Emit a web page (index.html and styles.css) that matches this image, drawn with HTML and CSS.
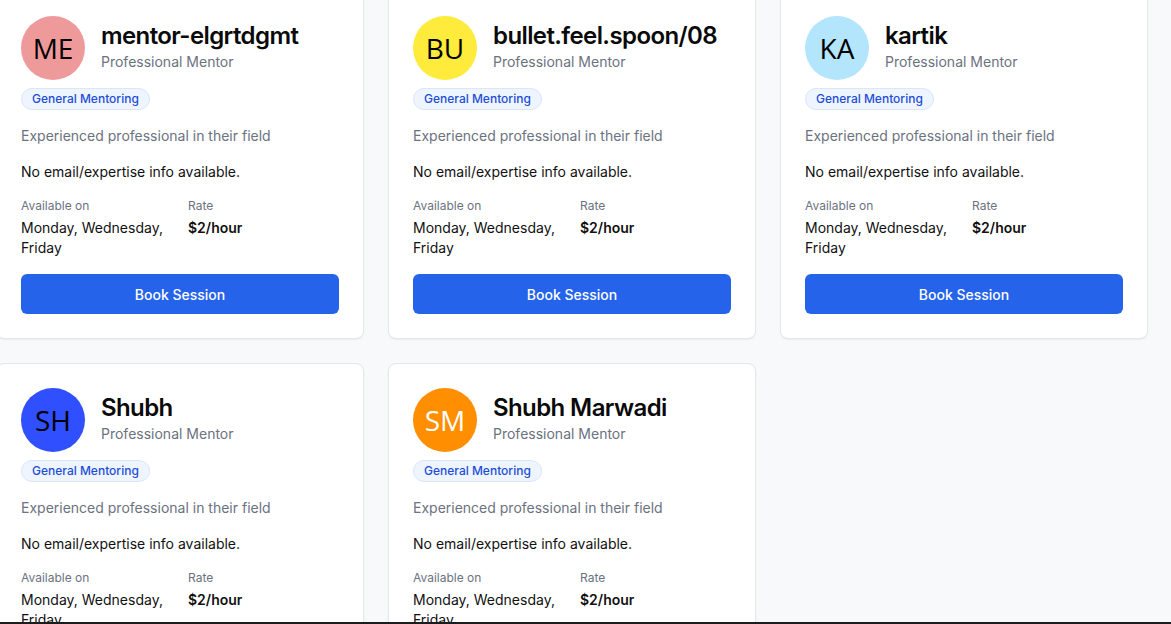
FILE: index.html
```html
<!DOCTYPE html>
<html lang="en">
<head>
<meta charset="utf-8">
<title>Mentors</title>
<link rel="stylesheet" href="styles.css">
</head>
<body>
<main class="grid">
  <article class="card">
    <header class="head">
      <div class="avatar av-pink">ME</div>
      <div class="who">
        <h2 class="name">mentor-elgrtdgmt</h2>
        <p class="role">Professional Mentor</p>
      </div>
    </header>
    <span class="badge">General Mentoring</span>
    <p class="desc">Experienced professional in their field</p>
    <p class="info">No email/expertise info available.</p>
    <div class="meta">
      <div><div class="label">Available on</div><div class="value">Monday, Wednesday, Friday</div></div>
      <div><div class="label">Rate</div><div class="value strong">$2/hour</div></div>
    </div>
    <button class="btn">Book Session</button>
  </article>

  <article class="card">
    <header class="head">
      <div class="avatar av-yellow">BU</div>
      <div class="who">
        <h2 class="name">bullet.feel.spoon/08</h2>
        <p class="role">Professional Mentor</p>
      </div>
    </header>
    <span class="badge">General Mentoring</span>
    <p class="desc">Experienced professional in their field</p>
    <p class="info">No email/expertise info available.</p>
    <div class="meta">
      <div><div class="label">Available on</div><div class="value">Monday, Wednesday, Friday</div></div>
      <div><div class="label">Rate</div><div class="value strong">$2/hour</div></div>
    </div>
    <button class="btn">Book Session</button>
  </article>

  <article class="card">
    <header class="head">
      <div class="avatar av-sky">KA</div>
      <div class="who">
        <h2 class="name">kartik</h2>
        <p class="role">Professional Mentor</p>
      </div>
    </header>
    <span class="badge">General Mentoring</span>
    <p class="desc">Experienced professional in their field</p>
    <p class="info">No email/expertise info available.</p>
    <div class="meta">
      <div><div class="label">Available on</div><div class="value">Monday, Wednesday, Friday</div></div>
      <div><div class="label">Rate</div><div class="value strong">$2/hour</div></div>
    </div>
    <button class="btn">Book Session</button>
  </article>

  <article class="card">
    <header class="head">
      <div class="avatar av-blue">SH</div>
      <div class="who">
        <h2 class="name">Shubh</h2>
        <p class="role">Professional Mentor</p>
      </div>
    </header>
    <span class="badge">General Mentoring</span>
    <p class="desc">Experienced professional in their field</p>
    <p class="info">No email/expertise info available.</p>
    <div class="meta">
      <div><div class="label">Available on</div><div class="value">Monday, Wednesday, Friday</div></div>
      <div><div class="label">Rate</div><div class="value strong">$2/hour</div></div>
    </div>
    <button class="btn">Book Session</button>
  </article>

  <article class="card">
    <header class="head">
      <div class="avatar av-orange">SM</div>
      <div class="who">
        <h2 class="name">Shubh Marwadi</h2>
        <p class="role">Professional Mentor</p>
      </div>
    </header>
    <span class="badge">General Mentoring</span>
    <p class="desc">Experienced professional in their field</p>
    <p class="info">No email/expertise info available.</p>
    <div class="meta">
      <div><div class="label">Available on</div><div class="value">Monday, Wednesday, Friday</div></div>
      <div><div class="label">Rate</div><div class="value strong">$2/hour</div></div>
    </div>
    <button class="btn">Book Session</button>
  </article>
</main>
<div class="edge"></div>
</body>
</html>
```

FILE: styles.css
```css
* { box-sizing: border-box; }

html, body {
  margin: 0;
  padding: 0;
  overflow: hidden;
  height: 100%;
}

body {
  background: #f8f9fb;
  font-family: Inter, "Liberation Sans", sans-serif;
  color: #111111;
}

.grid {
  display: grid;
  grid-template-columns: repeat(3, 368px);
  column-gap: 24px;
  row-gap: 24px;
  margin: -9px 0 0 -4px;
}

.card {
  background: #ffffff;
  border: 1px solid #e3e6ec;
  border-radius: 8px;
  box-shadow: 0 1px 2px rgba(16, 24, 40, 0.05);
  padding: 24px;
  display: flex;
  flex-direction: column;
  align-items: flex-start;
}

.head {
  display: flex;
  align-items: flex-start;
  gap: 16px;
  width: 100%;
}

.avatar {
  width: 64px;
  height: 64px;
  flex: 0 0 64px;
  border-radius: 50%;
  display: flex;
  align-items: center;
  justify-content: center;
  font-family: "Open Sans", "Noto Sans", sans-serif;
  font-size: 28px;
  font-weight: 400;
  color: #000000;
}

.av-pink { background: #ef9a9a; }
.av-yellow { background: #ffeb3b; }
.av-sky { background: #b3e5fc; }
.av-blue { background: #304ffe; }
.av-orange { background: #ff8f00; color: #ffffff; }

.who {
  padding-top: 4px;
}

.name {
  margin: 0;
  font-size: 24px;
  line-height: 32px;
  font-weight: 600;
  color: #0a0a0a;
  letter-spacing: -0.6px;
}

.role {
  margin: 0;
  font-size: 14px;
  line-height: 20px;
  color: #6b7280;
}

.badge {
  margin-top: 8px;
  display: inline-block;
  padding: 2px 10px;
  border: 1px solid #dbe6fb;
  background: #eff5ff;
  border-radius: 999px;
  font-size: 12px;
  line-height: 16px;
  font-weight: 500;
  color: #1d4ed8;
}

.desc {
  margin: 16px 0 0;
  font-size: 14px;
  line-height: 20px;
  color: #6b7280;
}

.info {
  margin: 16px 0 0;
  font-size: 14px;
  line-height: 20px;
  color: #111111;
}

.meta {
  margin-top: 16px;
  width: 100%;
  display: grid;
  grid-template-columns: 1fr 1fr;
  column-gap: 16px;
}

.label {
  font-size: 12px;
  line-height: 16px;
  color: #6b7280;
}

.value {
  margin-top: 4px;
  font-size: 14px;
  line-height: 20px;
  color: #111111;
}

.value.strong {
  font-weight: 600;
}

.btn {
  margin-top: 16px;
  width: 100%;
  height: 40px;
  border: 0;
  border-radius: 6px;
  background: #2563eb;
  color: #ffffff;
  font-family: Inter, "Liberation Sans", sans-serif;
  font-size: 14px;
  font-weight: 500;
  cursor: pointer;
}

.edge {
  position: fixed;
  left: 0;
  right: 0;
  bottom: 0;
  height: 2px;
  background: #1c1c1c;
}
```
